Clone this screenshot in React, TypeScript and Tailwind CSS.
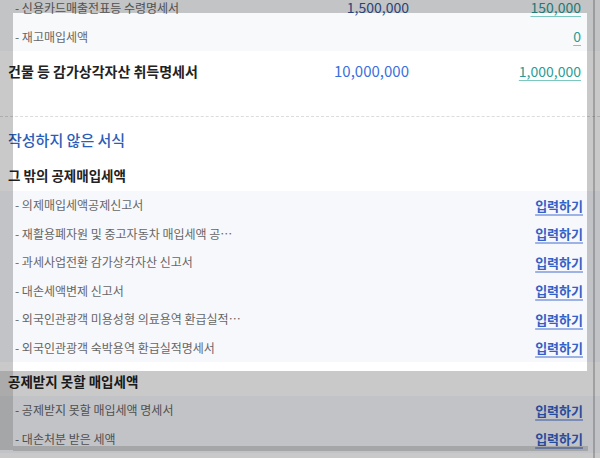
import React from "react";

type ItemProps = {
  label: string;
  tinted?: boolean;
};

// one "- 항목" line with the 입력하기 link on the right
function ItemRow({ label, tinted }: ItemProps) {
  return (
    <div className={`flex h-[28.5px] shrink-0 items-center pl-[15px] pr-[17px] ${tinted ? "bg-[#f7f8fc]" : "bg-[#f8f9fa]"}`}>
      <span className="flex-1 truncate text-[12px] text-[#666]">{label}</span>
      <a className="text-[13px] font-semibold text-[#3361c6] underline decoration-[#9db3e6] decoration-[1.5px] underline-offset-[3px]">
        입력하기
      </a>
    </div>
  );
}

const otherDeductions = [
  "- 의제매입세액공제신고서",
  "- 재활용폐자원 및 중고자동차 매입세액 공⋯",
  "- 과세사업전환 감가상각자산 신고서",
  "- 대손세액변제 신고서",
  "- 외국인관광객 미용성형 의료용역 환급실적⋯",
  "- 외국인관광객 숙박용역 환급실적명세서",
];

const nonDeductible = ["- 공제받지 못할 매입세액 명세서", "- 대손처분 받은 세액"];

export default function App() {
  return (
    <div className="relative h-[458px] w-[600px] overflow-hidden bg-white font-['Noto_Sans_CJK_KR',sans-serif] [font-feature-settings:'palt']">
      <div className="-mt-[7px] flex flex-col">
        <div className="flex h-[29px] items-center bg-[#f8f9fa] pl-[15px] pr-[19px]">
          <span className="flex-1 text-[12px] text-[#666]">- 신용카드매출전표등 수령명세서</span>
          <span className="w-[110px] text-right text-[14px] text-[#34569e]">1,500,000</span>
          <span className="ml-[22px] w-[150px] text-right text-[14px] text-[#2b9c94] underline decoration-[#7cc7c0] underline-offset-[3px]">
            150,000
          </span>
        </div>
        <div className="flex h-[29px] items-center bg-[#f8f9fa] pl-[15px] pr-[19px]">
          <span className="flex-1 text-[12px] text-[#666]">- 재고매입세액</span>
          <span className="ml-[22px] w-[150px] text-right text-[14px] text-[#2b9c94] underline decoration-[#7cc7c0] underline-offset-[3px]">
            0
          </span>
        </div>

        <div className="flex h-[40px] items-center pl-[8px] pr-[19px]">
          <span className="flex-1 text-[14px] font-bold text-[#222]">건물 등 감가상각자산 취득명세서</span>
          <span className="w-[110px] text-right text-[15px] text-[#3a6fdc]">10,000,000</span>
          <span className="ml-[22px] w-[150px] text-right text-[14px] text-[#2b9c94] underline decoration-[#7cc7c0] underline-offset-[3px]">
            1,000,000
          </span>
        </div>
        <div className="h-[26px] border-b border-dashed border-[#dcdcdc]" />

        <div className="flex h-[46px] items-center pl-[8px] text-[15px] font-medium text-[#2c5db8]">작성하지 않은 서식</div>
        <div className="flex h-[28px] items-center pb-[4px] pl-[8px] text-[13.5px] font-bold text-[#222]">
          그 밖의 공제매입세액
        </div>
        {otherDeductions.map((label) => (
          <ItemRow key={label} label={label} tinted />
        ))}

        <div className="flex h-[34px] items-center pl-[8px] pt-[4px] text-[13.5px] font-bold text-[#222]">
          공제받지 못할 매입세액
        </div>
        {nonDeductible.map((label) => (
          <ItemRow key={label} label={label} tinted />
        ))}
      </div>

      {/* video spotlight dimming */}
      <div className="pointer-events-none absolute left-[13px] top-[13px] h-[358px] w-[574px] shadow-[0_0_0_700px_rgba(0,0,0,0.21)]" />
      <div className="pointer-events-none absolute left-0 top-[371px] h-[79px] w-[13px] bg-black/15" />
      <div className="pointer-events-none absolute left-[13px] top-[446px] h-[5px] w-[575px] bg-black/15" />
      <div className="pointer-events-none absolute right-[5px] top-0 h-full w-[2px] bg-black/20" />
    </div>
  );
}
